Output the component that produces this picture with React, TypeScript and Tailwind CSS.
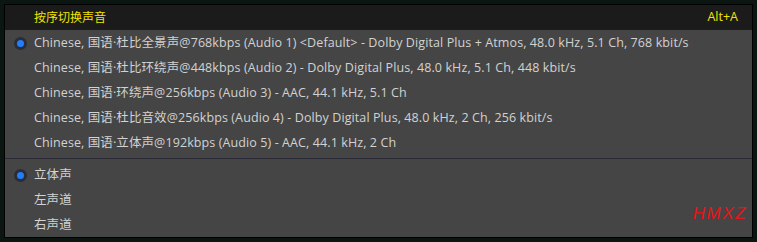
import React from "react";

const font = { fontFamily: '"Open Sans", "Noto Sans CJK SC", sans-serif' };

const tracks = [
  { t: "Chinese, 国语·杜比全景声@768kbps (Audio 1) <Default> - Dolby Digital Plus + Atmos, 48.0 kHz, 5.1 Ch, 768 kbit/s", on: true },
  { t: "Chinese, 国语·杜比环绕声@448kbps (Audio 2) - Dolby Digital Plus, 48.0 kHz, 5.1 Ch, 448 kbit/s" },
  { t: "Chinese, 国语·环绕声@256kbps (Audio 3) - AAC, 44.1 kHz, 5.1 Ch" },
  { t: "Chinese, 国语·杜比音效@256kbps (Audio 4) - Dolby Digital Plus, 48.0 kHz, 2 Ch, 256 kbit/s" },
  { t: "Chinese, 国语·立体声@192kbps (Audio 5) - AAC, 44.1 kHz, 2 Ch" },
];

const chans = [
  { t: "立体声", on: true },
  { t: "左声道" },
  { t: "右声道" },
];

function Row({ t, on }: { t: string; on?: boolean }) {
  return (
    <div className="h-[25px] flex items-center pt-[1px]">
      <div className="w-[29px] flex justify-center pl-[1px]">
        {on && (
          <div className="w-[13px] h-[13px] rounded-full bg-[#2c2c34] flex items-center justify-center">
            <div className="w-[7px] h-[7px] rounded-full bg-[#1f7fff]" />
          </div>
        )}
      </div>
      <span className="text-[12.5px] tracking-[0.1px] text-[#d2d2d2] whitespace-nowrap leading-none">{t}</span>
    </div>
  );
}

export default function App() {
  return (
    <div className="w-[757px] h-[242px] bg-[#0b1511] overflow-hidden pt-[4px] pl-[4px]" style={font}>
      <div className="w-[749px] h-[234px] border border-black bg-[#454545] flex flex-col relative">
        <div className="h-[25px] bg-[#1b1b1b] flex items-center justify-between pl-[29px] pr-[14px] shrink-0">
          <span className="text-[12px] text-[#f2e500] leading-none">按序切换声音</span>
          <span className="text-[12.5px] text-[#f2e500] leading-none">Alt+A</span>
        </div>
        {tracks.map((r, i) => (
          <Row key={i} t={r.t} on={r.on} />
        ))}
        <div className="h-[7px] flex items-center">
          <div className="w-full h-[1px] bg-[#2a2a36]" />
        </div>
        {chans.map((r, i) => (
          <Row key={i} t={r.t} on={r.on} />
        ))}
        <div className="absolute right-[5px] bottom-[15px] text-[17px] italic text-[#e8131a] leading-none tracking-[1.5px]" style={{ fontFamily: '"Liberation Sans", sans-serif', fontWeight: 300 }}>
          HMXZ
        </div>
      </div>
    </div>
  );
}
